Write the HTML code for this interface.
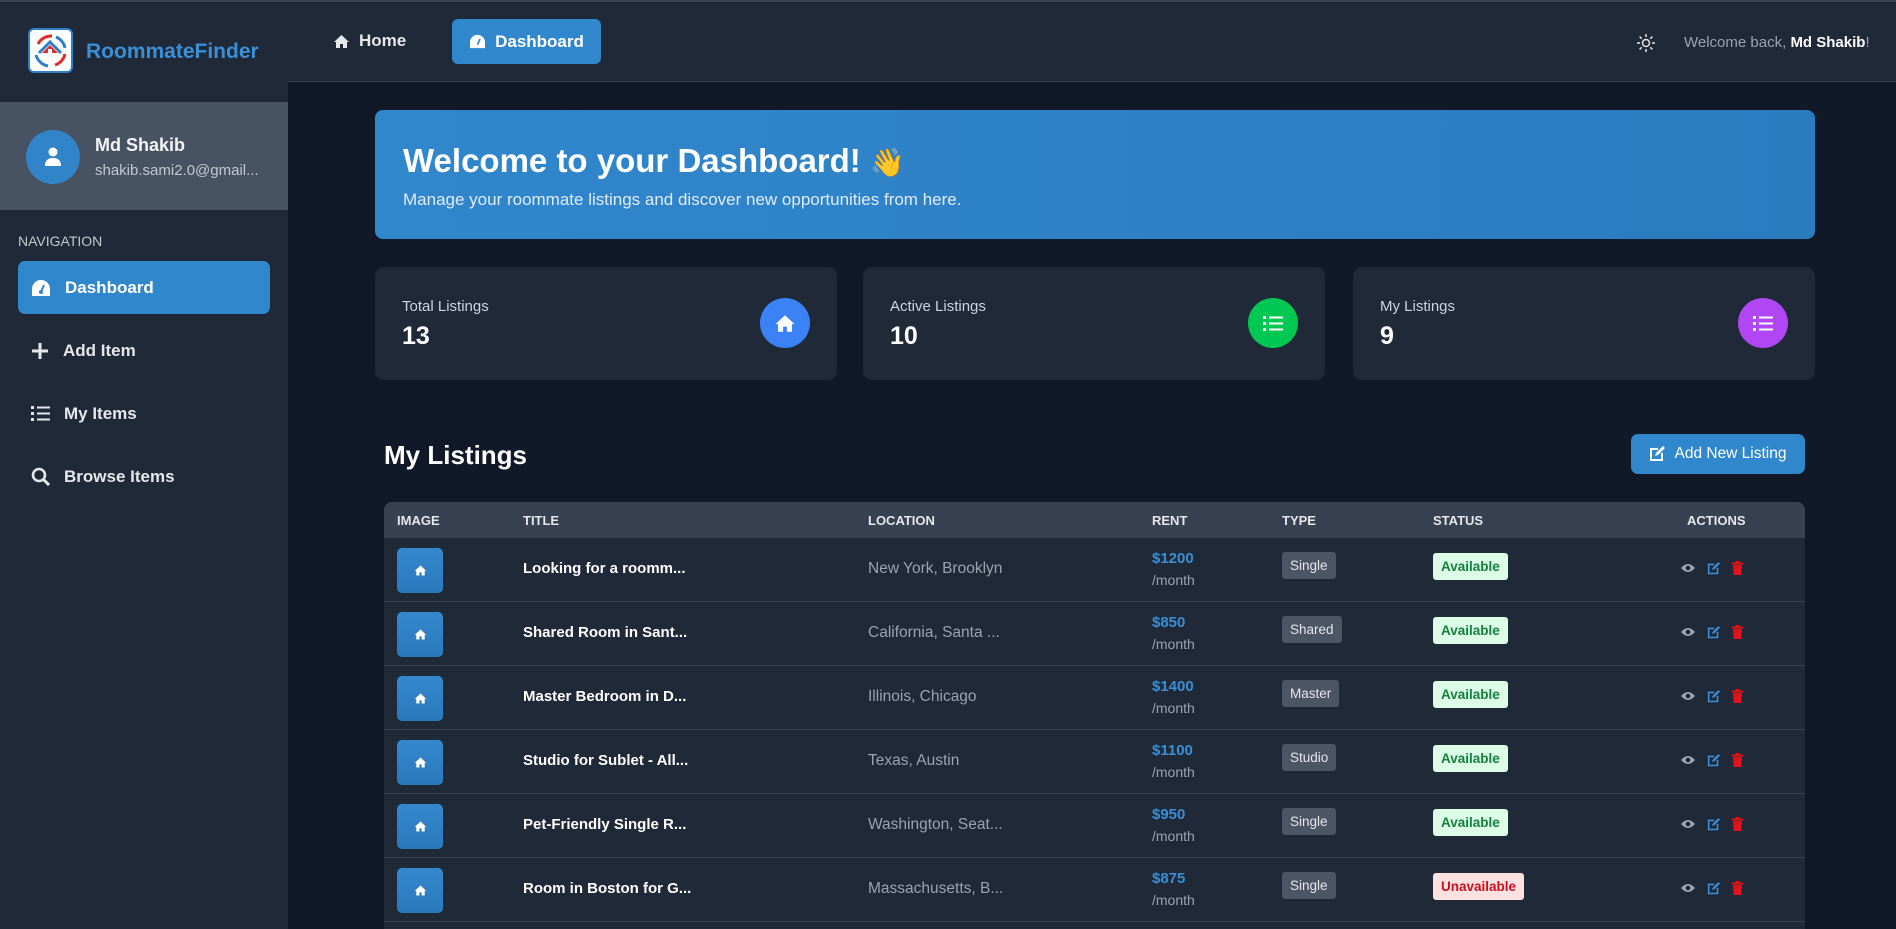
<!DOCTYPE html>
<html style="width:1896px;height:929px;overflow:hidden"><head><meta charset="utf-8"><style>
*{box-sizing:border-box;margin:0;padding:0}
body{width:1896px;height:929px;overflow:hidden;background:#111827;font-family:"Liberation Sans",sans-serif;color:#fff;position:relative}
.abs{position:absolute}
#side{left:0;top:0;width:288px;height:929px;background:#1f2937;border-top:2px solid #3a4250}
#top{left:288px;top:0;width:1608px;height:82px;background:#1f2937;border-top:2px solid #3a4250;border-bottom:1px solid #374151}
.nav{position:absolute;left:18px;width:252px;height:53px;border-radius:7px;display:flex;align-items:center;padding-left:13px;font-size:17px;font-weight:bold;color:#e5e7eb}
.nav svg{margin-right:14px}
.card{position:absolute;top:267px;width:462px;height:113px;background:#1f2937;border-radius:9px}
.card .l{position:absolute;left:27px;top:31px;font-size:15px;color:#cbd5e1}
.card .n{position:absolute;left:27px;top:55px;font-size:25px;font-weight:bold}
.card .c{position:absolute;left:385px;top:31px;width:50px;height:50px;border-radius:50%;display:flex;align-items:center;justify-content:center}
.th{position:absolute;top:513px;font-size:13px;font-weight:bold;color:#e5e7eb}
#wrap{position:absolute;left:0;top:0;width:1896px;height:929px;overflow:hidden}
.row{position:absolute;left:384px;width:1421px;height:64px;background:#1f2937;border-top:1px solid #374151}
.row>*{position:absolute}
.img{left:13px;top:10px;width:46px;height:45px;border-radius:5px;background:linear-gradient(#3588cc,#2b78bd);display:flex;align-items:center;justify-content:center}
.t{left:139px;top:22px;font-size:15px;font-weight:bold}
.loc{left:484px;top:22px;font-size:15.5px;color:#9ca3af}
.rent{left:768px;top:12px;font-size:15px;color:#3b8fd6;font-weight:bold}
.mo{left:768px;top:34px;font-size:14px;color:#9ca3af}
.type{left:898px;top:14px;height:27px;padding:0 8px;background:#4b5563;border-radius:3px;font-size:13.5px;line-height:27px;color:#e5e7eb}
.st{left:1049px;top:15px;height:27px;padding:0 8px;border-radius:3px;font-size:13.5px;line-height:28px;font-weight:bold}
.av{background:#dcfce7;color:#15803d}.un{background:#fee2e2;color:#c8101e}
.act{left:1297px;top:23px;display:flex;gap:12px;align-items:center}
</style></head><body><div id="wrap">
<div id="side" class="abs">
 <div class="abs" style="left:28px;top:26px;width:45px;height:45px;border-radius:6px;background:#fff;border:2px solid #2f80c9">
  <svg width="41" height="41" viewBox="0 0 41 41"><path d="M8 14 A15 15 0 0 1 22 6" stroke="#e02b2b" stroke-width="3" fill="none"/><path d="M26 7 A15 15 0 0 1 35 18" stroke="#2f80c9" stroke-width="3" fill="none"/><path d="M35 24 A15 15 0 0 1 25 35" stroke="#e02b2b" stroke-width="3" fill="none"/><path d="M18 36 A15 15 0 0 1 6 25" stroke="#2f80c9" stroke-width="3" fill="none"/><path d="M9 23 L20 12 L31 23" stroke="#2f80c9" stroke-width="3" fill="none"/><path d="M12 23 L20 15 L28 23Z" fill="#e02b2b"/><rect x="18" y="19" width="4" height="4" fill="#fff"/></svg>
 </div>
 <div class="abs" style="left:86px;top:38px;font-size:21px;font-weight:bold;color:#3b8fd6">RoommateFinder</div>
 <div class="abs" style="left:0;top:100px;width:288px;height:108px;background:#475263"></div>
 <div class="abs" style="left:26px;top:128px;width:54px;height:54px;border-radius:50%;background:#3284c9;display:flex;align-items:center;justify-content:center"><svg width="18" height="20" viewBox="0 0 18 20"><circle cx="9" cy="5" r="4.5" fill="#fff"/><path d="M1 19 Q1 11 9 11 Q17 11 17 19Z" fill="#fff"/></svg></div>
 <div class="abs" style="left:95px;top:133px;font-size:18px;font-weight:bold;color:#f3f4f6">Md Shakib</div>
 <div class="abs" style="left:95px;top:160px;font-size:15px;color:#c2c8d0">shakib.sami2.0@gmail...</div>
 <div class="abs" style="left:18px;top:231px;font-size:14px;color:#c2c8d0">NAVIGATION</div>
 <div class="nav" style="top:259px;background:#3187cc;color:#fff"><svg width="20" height="18" viewBox="0 0 20 18"><path d="M10 1 A9 9 0 0 0 1 10 L1 17 L19 17 L19 10 A9 9 0 0 0 10 1Z" fill="#fff"/><path d="M10 13 L13 6" stroke="#3187cc" stroke-width="2"/><circle cx="10" cy="13" r="2" fill="#3187cc"/></svg>Dashboard</div>
 <div class="nav" style="top:322px"><svg width="18" height="18"><path d="M9 1V17M1 9H17" stroke="#e5e7eb" stroke-width="3"/></svg>Add Item</div>
 <div class="nav" style="top:385px"><svg width="19" height="17"><g fill="#e5e7eb"><rect x="0" y="1" width="3" height="3"/><rect x="0" y="7" width="3" height="3"/><rect x="0" y="13" width="3" height="3"/><rect x="6" y="1.5" width="13" height="2"/><rect x="6" y="7.5" width="13" height="2"/><rect x="6" y="13.5" width="13" height="2"/></g></svg>My Items</div>
 <div class="nav" style="top:448px"><svg width="19" height="19"><circle cx="8" cy="8" r="6" stroke="#e5e7eb" stroke-width="2.6" fill="none"/><path d="M12.5 12.5 L18 18" stroke="#e5e7eb" stroke-width="3"/></svg>Browse Items</div>
</div>
<div id="top" class="abs">
 <div class="abs" style="left:45px;top:29px;display:flex;align-items:center;font-size:17px;font-weight:bold;color:#e5e7eb"><svg width="17" height="15" viewBox="0 0 17 15" style="margin-right:9px"><path d="M8.5 1 L16 8 L14 8 L14 14 L10 14 L10 10 L7 10 L7 14 L3 14 L3 8 L1 8Z" fill="#e5e7eb"/></svg>Home</div>
 <div class="abs" style="left:164px;top:17px;width:149px;height:45px;border-radius:6px;background:#3187cc;display:flex;align-items:center;justify-content:center;font-size:17px;font-weight:bold"><svg width="17" height="15" viewBox="0 0 20 18" style="margin-right:9px"><path d="M10 1 A9 9 0 0 0 1 10 L1 17 L19 17 L19 10 A9 9 0 0 0 10 1Z" fill="#fff"/><path d="M10 13 L13 6" stroke="#3187cc" stroke-width="2"/></svg>Dashboard</div>
 <svg class="abs" style="left:1349px;top:32px" width="18" height="18" viewBox="0 0 18 18"><circle cx="9" cy="9" r="3.5" stroke="#e5e7eb" stroke-width="1.5" fill="none"/><g stroke="#e5e7eb" stroke-width="1.5"><path d="M9 0V3M9 15V18M0 9H3M15 9H18M2.6 2.6L4.7 4.7M13.3 13.3L15.4 15.4M2.6 15.4L4.7 13.3M13.3 4.7L15.4 2.6"/></g></svg>
 <div class="abs" style="left:1396px;top:32px;font-size:15px;color:#9ca3af;white-space:nowrap">Welcome back, <b style="color:#fff">Md Shakib</b>!</div>
</div>
<div class="abs" style="left:375px;top:110px;width:1440px;height:129px;border-radius:8px;background:linear-gradient(90deg,#3187cc,#2b7bbf)">
 <div class="abs" style="left:28px;top:32px;font-size:33px;font-weight:bold">Welcome to your Dashboard! <span style="font-family:'Noto Color Emoji',sans-serif;font-size:28px">👋</span></div>
 <div class="abs" style="left:28px;top:80px;font-size:17px;color:#e0ecf8">Manage your roommate listings and discover new opportunities from here.</div>
</div>
<div class="card" style="left:375px"><div class="l">Total Listings</div><div class="n">13</div><div class="c" style="background:#3b82f6"><svg width="22" height="19" viewBox="0 0 17 15"><path d="M8.5 1 L16 8 L14 8 L14 14 L10 14 L10 10 L7 10 L7 14 L3 14 L3 8 L1 8Z" fill="#fff"/></svg></div></div>
<div class="card" style="left:863px"><div class="l">Active Listings</div><div class="n">10</div><div class="c" style="background:#00c853"><svg width="20" height="17"><g fill="#fff"><rect x="0" y="1" width="3" height="3"/><rect x="0" y="7" width="3" height="3"/><rect x="0" y="13" width="3" height="3"/><rect x="6" y="1.5" width="14" height="2"/><rect x="6" y="7.5" width="14" height="2"/><rect x="6" y="13.5" width="14" height="2"/></g></svg></div></div>
<div class="card" style="left:1353px"><div class="l">My Listings</div><div class="n">9</div><div class="c" style="background:#b146f5"><svg width="20" height="17"><g fill="#fff"><rect x="0" y="1" width="3" height="3"/><rect x="0" y="7" width="3" height="3"/><rect x="0" y="13" width="3" height="3"/><rect x="6" y="1.5" width="14" height="2"/><rect x="6" y="7.5" width="14" height="2"/><rect x="6" y="13.5" width="14" height="2"/></g></svg></div></div>
<div class="abs" style="left:384px;top:440px;font-size:26px;font-weight:bold">My Listings</div>
<div class="abs" style="left:1631px;top:434px;width:174px;height:40px;border-radius:7px;background:#3187cc;display:flex;align-items:center;justify-content:center;font-size:15.5px"><svg width="16" height="16" viewBox="0 0 16 16" style="margin-right:9px"><path d="M9 3H2V14H13V7" stroke="#fff" stroke-width="2" fill="none"/><path d="M6 10L7 7L14 0L16 2L9 9Z" fill="#fff"/></svg>Add New Listing</div>
<div class="abs" style="left:384px;top:502px;width:1421px;height:36px;background:#374151;border-radius:8px 8px 0 0"></div>
<div class="th" style="left:397px">IMAGE</div><div class="th" style="left:523px">TITLE</div><div class="th" style="left:868px">LOCATION</div><div class="th" style="left:1152px">RENT</div><div class="th" style="left:1282px">TYPE</div><div class="th" style="left:1433px">STATUS</div><div class="th" style="left:1687px">ACTIONS</div>
<div id="rows"></div>
</div>
<script>
var d=[["Looking for a roomm...","New York, Brooklyn","$1200","Single",1],["Shared Room in Sant...","California, Santa ...","$850","Shared",1],["Master Bedroom in D...","Illinois, Chicago","$1400","Master",1],["Studio for Sublet - All...","Texas, Austin","$1100","Studio",1],["Pet-Friendly Single R...","Washington, Seat...","$950","Single",1],["Room in Boston for G...","Massachusetts, B...","$875","Single",0],["","","","",2]];
var h="";d.forEach(function(r,i){var top=537+i*64;
if(r[4]==2){h+='<div class="row" style="top:'+top+'px;height:'+(929-top)+'px"></div>';return;}
h+='<div class="row" style="top:'+top+'px"><div class="img"><svg width="13" height="13" viewBox="0 0 17 15"><path d="M8.5 1 L16 8 L14 8 L14 14 L10 14 L10 10 L7 10 L7 14 L3 14 L3 8 L1 8Z" fill="#fff"/></svg></div><div class="t">'+r[0]+'</div><div class="loc">'+r[1]+'</div><div class="rent">'+r[2]+'</div><div class="mo">/month</div><div class="type">'+r[3]+'</div><div class="st '+(r[4]?'av':'un')+'">'+(r[4]?'Available':'Unavailable')+'</div><div class="act"><svg width="14" height="10" viewBox="0 0 14 10"><path d="M0 5Q7 -3 14 5Q7 13 0 5Z" fill="#9ca3af"/><circle cx="7" cy="5" r="2.3" fill="#1f2937"/></svg><svg width="13" height="13" viewBox="0 0 16 16"><path d="M9 3H2V14H13V7" stroke="#3b8fd6" stroke-width="2" fill="none"/><path d="M6 10L7 7L14 0L16 2L9 9Z" fill="#3b8fd6"/></svg><svg width="11" height="14" viewBox="0 0 11 14"><rect x="0" y="1.5" width="11" height="2" fill="#e3131e"/><rect x="3.5" y="0" width="4" height="2" fill="#e3131e"/><path d="M1 4H10L9.3 14H1.7Z" fill="#e3131e"/></svg></div></div>';});
document.getElementById("rows").innerHTML=h;
</script>
</body></html>
